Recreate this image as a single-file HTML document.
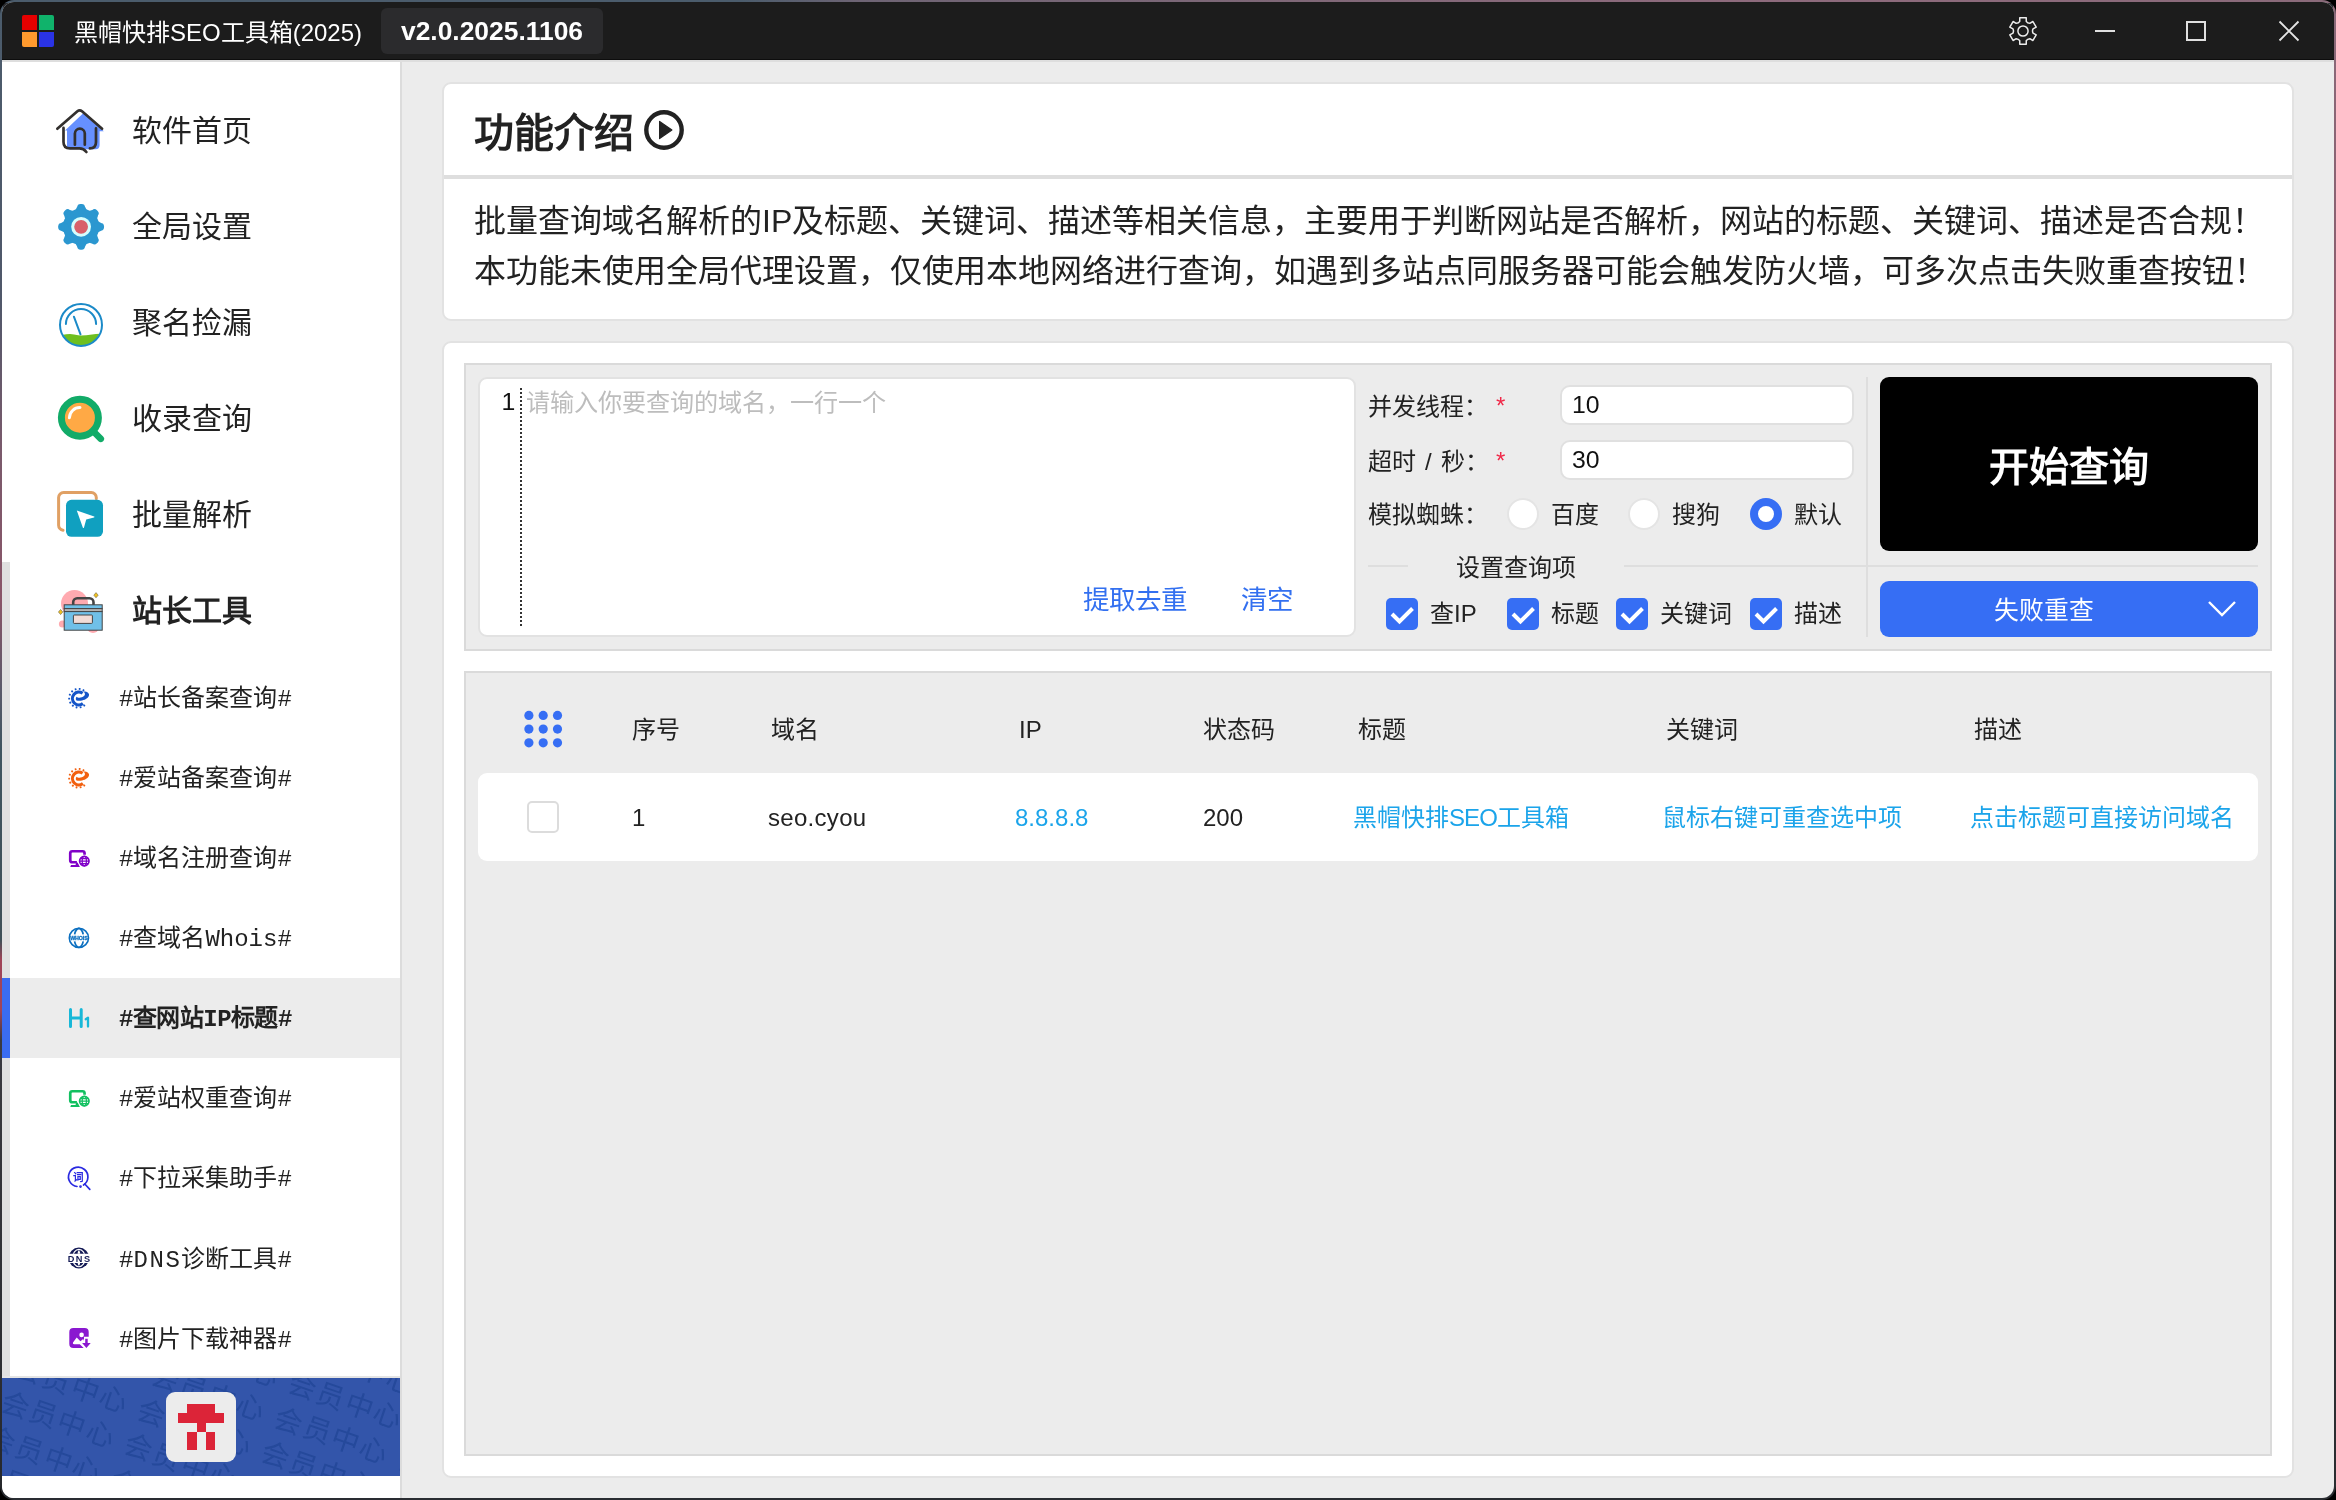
<!DOCTYPE html>
<html lang="zh-CN">
<head>
<meta charset="utf-8">
<title>黑帽快排SEO工具箱(2025)</title>
<style>
*{box-sizing:border-box;margin:0;padding:0}
html,body{width:2336px;height:1500px;overflow:hidden;background:#000}
body{font-family:"Liberation Sans",sans-serif;color:#222;position:relative}
.a{position:absolute;white-space:nowrap}
#frame{left:0;top:0;width:2336px;height:1500px;border-radius:14px;overflow:hidden;will-change:transform;
 background:
  linear-gradient(to right,#4b5c6c 0,#4b5c6c 740px,#6e6474 860px,#806878 1300px,#8d6a7c 1700px,#8a6a7a 2336px) top/100% 3px no-repeat,
  linear-gradient(to bottom,#4b5c6c 0,#50586a 300px,#7a5a6c 450px,#8a5568 600px,#5a5a6a 690px,#3f5560 750px,#3f5058 940px,#a04458 960px,#a04458 1010px,#3a3a40 1040px,#26282c 1500px) left/3px 100% no-repeat,
  linear-gradient(to bottom,#8a6a7a 0,#8a6070 250px,#a05a6c 400px,#8a5a6a 550px,#5a5a68 700px,#3f6470 770px,#3c4a54 900px,#3a3638 1000px,#303034 1100px,#2a2c30 1500px) right/3px 100% no-repeat,
  #2a2d32}
#win{left:2px;top:2px;width:2332px;height:1496px;border-radius:12px;overflow:hidden;background:#ececec}
/* title bar */
#tbar{left:0;top:0;width:2332px;height:58px;background:#1c1c1c;border-bottom:1px solid #0d0d0d}
#ttl{left:72px;top:2px;height:58px;line-height:58px;font-size:24px;color:#fff}
#ver{left:379px;top:6px;width:222px;height:46px;border-radius:6px;background:#2b2b2d;color:#fff;font-weight:bold;font-size:26.4px;line-height:46px;text-align:center}
#topline{left:0;top:58px;width:2332px;height:2px;background:#dedede}
/* sidebar */
#side{left:0;top:60px;width:398px;height:1436px;background:#fff}
#sideb{left:398px;top:60px;width:2px;height:1436px;background:#dcdcdc}
.mi{left:130px;height:96px;line-height:96px;font-size:30px;color:#222}
.si{left:117px;height:80px;line-height:80px;font-size:24px;color:#222;font-family:"Liberation Mono",monospace}
#grp{left:0;top:560px;width:8px;height:816px;background:#e0e0e0}
#act{left:0;top:976px;width:398px;height:80px;background:#ececec;border-left:8px solid #3a6cf0}
#vipline{left:0;top:1374px;width:398px;height:2px;background:#e4e4e4}
#vip{left:0;top:1376px;width:398px;height:98px;background:#3355aa;overflow:hidden}
#vipt{left:164px;top:1390px;width:70px;height:70px;border-radius:9px;background:#ececec}
/* cards */
.card{background:#fff;border:2px solid #e2e2e2;border-radius:9px}
.panel{background:#ececec;border:2px solid #dadada}
.wm{font-size:28px;line-height:36px;height:36px;color:#25499b;letter-spacing:2px}
.wm span{display:inline-block;width:130.5px}
.t24{font-size:24px;line-height:32px;height:32px}
.blue{color:#3370f0}
.cy{color:#1ba4ea}
.inp{background:#fff;border:2px solid #e0e0e0;border-radius:10px;font-size:24.8px;line-height:36px;padding-left:10px;color:#111}
.cb{width:32px;height:32px;border-radius:5px;background:#366ef4}
.rd{width:32px;height:32px;border-radius:50%;background:#fff;border:2px solid #e4e4e4}
.hl{height:2px;background:#dedede}
</style>
</head>
<body>
<div id="frame" class="a">
<div id="win" class="a">

<!-- TITLE BAR -->
<div id="tbar" class="a"></div>
<svg class="a" style="left:20px;top:13px" width="34" height="34" viewBox="0 0 34 34">
 <path d="M2 0H15V15H0V2A2 2 0 0 1 2 0Z" fill="#e60000"/>
 <path d="M17 0H30A2 2 0 0 1 32 2V15H17Z" fill="#10b36b"/>
 <path d="M0 17H15V32H2A2 2 0 0 1 0 30Z" fill="#ff9a2e"/>
 <path d="M17 17H32V30A2 2 0 0 1 30 32H17Z" fill="#2a33e6"/>
</svg>
<div id="ttl" class="a">黑帽快排SEO工具箱(2025)</div>
<div id="ver" class="a">v2.0.2025.1106</div>
<!-- window controls -->
<svg class="a" style="left:2004.3px;top:12px" width="34" height="34" viewBox="-17 -17 34 34" fill="none" stroke="#ececec" stroke-width="1.5" stroke-linejoin="round">
 <circle cx="0" cy="0" r="5.1"/>
 <path d="M3.25 -9.7L3.25 -13.35L-3.25 -13.35L-3.25 -9.7Q-4.5 -7.79 -6.78 -7.66L-9.94 -9.49L-13.19 -3.86L-10.03 -2.04Q-9.0 -0.0 -10.03 2.04L-13.19 3.86L-9.94 9.49L-6.78 7.66Q-4.5 7.79 -3.25 9.7L-3.25 13.35L3.25 13.35L3.25 9.7Q4.5 7.79 6.78 7.66L9.94 9.49L13.19 3.86L10.03 2.04Q9.0 0.0 10.03 -2.04L13.19 -3.86L9.94 -9.49L6.78 -7.66Q4.5 -7.79 3.25 -9.7Z"/>
</svg>
<div class="a" style="left:2093px;top:28px;width:20px;height:2px;background:#e0e0e0"></div>
<div class="a" style="left:2184px;top:19px;width:20px;height:20px;border:2px solid #e0e0e0"></div>
<svg class="a" style="left:2276px;top:18px" width="22" height="22" viewBox="0 0 22 22" stroke="#e4e4e4" stroke-width="1.9"><path d="M1.5 1.5L20.5 20.5M20.5 1.5L1.5 20.5"/></svg>
<div id="topline" class="a"></div>

<!-- SIDEBAR -->
<div id="side" class="a"></div>
<div id="sideb" class="a"></div>
<div id="grp" class="a"></div>
<div id="act" class="a"></div>

<!-- main menu icons -->
<svg class="a" style="left:48px;top:98px" width="60" height="60" viewBox="0 0 60 60" fill="none" stroke-linecap="round" stroke-linejoin="round">
 <path d="M33.2 13.3L15 30.5H17V46.2Q17 49.2 20 49.2H45.5Q49.6 49.2 49.6 45V31.3H53.8Z" fill="#6690ff"/>
 <path d="M7.3 28.7L27.4 11.3Q29.7 9.4 32 11.3L52.1 28.7" stroke="#33302e" stroke-width="2.7"/>
 <path d="M13.5 27.9V42Q13.5 48.4 20 48.4H29.5Q33.6 48.4 36.4 52" stroke="#33302e" stroke-width="2.7"/>
 <path d="M46 28.4V42Q46 48.4 39.9 48.4" stroke="#33302e" stroke-width="2.7"/>
 <path d="M24.9 44.7V33.6A4.95 4.95 0 0 1 34.8 33.6V44.7" stroke="#33302e" stroke-width="2.7"/>
</svg>
<svg class="a" style="left:54px;top:200px" width="50" height="50" viewBox="0 0 50 50">
 <g transform="translate(25.1 24.8)" fill="#2b97d0">
  <circle r="18.2"/>
  <g id="tooth"><rect x="-3.9" y="-22.9" width="7.8" height="10" rx="3.4"/><path d="M-5.8 -16.5L-3.9 -20H3.9L5.8 -16.5Z"/></g>
  <use href="#tooth" transform="rotate(45)"/><use href="#tooth" transform="rotate(90)"/><use href="#tooth" transform="rotate(135)"/>
  <use href="#tooth" transform="rotate(180)"/><use href="#tooth" transform="rotate(225)"/><use href="#tooth" transform="rotate(270)"/><use href="#tooth" transform="rotate(315)"/>
  <circle r="9.9" fill="#d6fdfd"/><circle r="6.9" fill="#d8606a"/>
 </g>
</svg>
<svg class="a" style="left:54px;top:298px" width="50" height="50" viewBox="0 0 50 50" fill="none" stroke="#1b8ac8" stroke-width="2" stroke-linecap="round">
 <clipPath id="gc"><circle cx="25" cy="24.9" r="20.6"/></clipPath>
 <path d="M0 36L6 35Q13 33.6 18 34.4T25 35.6Q30 35.4 36 34.4T50 34V50H0Z" fill="#6ebf1f" stroke="none" clip-path="url(#gc)"/>
 <circle cx="25" cy="24.9" r="21"/>
 <path d="M9.9 24.1A15.1 15.1 0 0 1 40.1 24.1"/>
 <path d="M17.9 16.7L24.5 34.3"/>
</svg>
<svg class="a" style="left:54px;top:391px" width="52" height="52" viewBox="0 0 52 52" fill="none" stroke-linecap="round">
 <path d="M36 37L44.8 45.8" stroke="#12ab68" stroke-width="6.6"/>
 <circle cx="23.9" cy="24.7" r="18.5" fill="#ffa945" stroke="#12ab68" stroke-width="7"/>
 <path d="M13.4 24.7A10.5 10.5 0 0 1 24 14.6" stroke="#fff" stroke-width="3"/>
</svg>
<svg class="a" style="left:48px;top:484px" width="60" height="60" viewBox="0 0 60 60" fill="none">
 <path d="M46.3 12.4V11.5A5 5 0 0 0 41.3 6.5H13.6A5 5 0 0 0 8.6 11.5V39.3A5 5 0 0 0 13 44.2" stroke="#e0a064" stroke-width="3" stroke-linecap="round"/>
 <rect x="16" y="13.8" width="37" height="37" rx="5.5" fill="#10a0c0"/>
 <path d="M26.8 24.6L44.2 30.6Q45 31 44 31.5L36.2 33.6L34 41.4Q33.4 42.6 32.8 41.4Z" fill="#fff"/>
</svg>
<svg class="a" style="left:48px;top:584px" width="60" height="60" viewBox="0 0 60 60">
 <circle cx="24.5" cy="17.5" r="13.5" fill="#ffaab0"/><circle cx="43" cy="41" r="6" fill="#ffaab0"/><circle cx="12.5" cy="38" r="3.6" fill="#ffaab0"/>
 <path d="M23.2 19V16.2A4 4 0 0 1 27.2 12.2H39.5A4 4 0 0 1 43.5 16.2V19" fill="none" stroke="#444" stroke-width="2.6"/>
 <g stroke="#444" stroke-width="1">
  <rect x="14.2" y="18.8" width="38" height="3.8" fill="#70c0e8"/>
  <rect x="14.2" y="22.6" width="38" height="3" fill="#b4b4b4"/>
  <rect x="14.2" y="25.6" width="38" height="18.6" fill="#70c0e8"/>
  <rect x="23.4" y="29" width="19" height="8.4" rx="0.8" fill="#f2dcd6"/>
 </g>
 <path d="M46 6.6L48.2 9.2L46 11.8L43.8 9.2Z M10.6 23.4L12.8 26L10.6 28.6L8.4 26Z" fill="#f0c020" stroke="#554" stroke-width="0.5"/>
</svg>

<div class="a mi" style="top:81px">软件首页</div>
<div class="a mi" style="top:177px">全局设置</div>
<div class="a mi" style="top:273px">聚名捡漏</div>
<div class="a mi" style="top:369px">收录查询</div>
<div class="a mi" style="top:465px">批量解析</div>
<div class="a mi" style="top:561px;font-weight:bold">站长工具</div>

<!-- sub menu icons -->
<svg width="0" height="0" style="position:absolute">
 <defs>
  <g id="swirl">
   <path d="M24.6 15.3A6.4 6.4 0 1 0 24.9 25.5" fill="none" stroke="currentColor" stroke-width="3.1"/>
   <path d="M25.2 13.4C29.6 13.3 32.2 15.4 30.6 18.6C28.6 22.2 22 23.6 18.4 22.4C17.5 21 17.7 19.6 18.7 18.7C20 20.4 23.8 20 26 18.1C27.6 16.6 27.2 14.6 25.2 13.4Z" fill="currentColor"/>
   <g fill="currentColor" transform="translate(20.5 20.2)">
    <rect id="dt" x="8.4" y="-0.9" width="1.9" height="1.8" rx="0.4" transform="rotate(-58)"/>
    <use href="#dt" transform="rotate(-25)"/><use href="#dt" transform="rotate(-50)"/><use href="#dt" transform="rotate(-75)"/><use href="#dt" transform="rotate(-100)"/>
    <use href="#dt" transform="rotate(-125)"/><use href="#dt" transform="rotate(-150)"/><use href="#dt" transform="rotate(-175)"/><use href="#dt" transform="rotate(-200)"/>
    <use href="#dt" transform="rotate(-225)"/><use href="#dt" transform="rotate(-250)"/>
   </g>
  </g>
  <g id="mon" fill="none" stroke="currentColor">
   <path d="M26.55 16.8V15.25A2 2 0 0 0 24.55 13.25H14.25A2 2 0 0 0 12.25 15.25V22.25A2 2 0 0 0 14.25 24.25H18.9" stroke-width="2.7"/>
   <path d="M12.3 28.9L13 26.9H17.6L18 24.5H19.6L21.9 28.9Z" fill="currentColor" stroke="none"/>
   <circle cx="26.3" cy="23.1" r="4.7" stroke-width="1.7"/>
   <ellipse cx="26.3" cy="23.1" rx="2.1" ry="4.7" stroke-width="1.3"/>
   <path d="M21.6 23.1H31M22.4 20.6H30.2M22.4 25.7H30.2" stroke-width="1.2"/>
  </g>
 </defs>
</svg>
<svg class="a" style="left:56px;top:676px;color:#1455c8" width="40" height="40" viewBox="0 0 40 40"><use href="#swirl"/></svg>
<svg class="a" style="left:56px;top:756px;color:#f26010" width="40" height="40" viewBox="0 0 40 40"><use href="#swirl"/></svg>
<svg class="a" style="left:56px;top:836px;color:#8000c8" width="40" height="40" viewBox="0 0 40 40"><use href="#mon"/></svg>
<svg class="a" style="left:56px;top:916px" width="40" height="40" viewBox="0 0 40 40" fill="none" stroke="#0b6fc0" stroke-width="1.6">
 <circle cx="20.9" cy="19.9" r="9.6"/>
 <path d="M16.6 16.4Q17.6 11 20.9 10.3Q24.2 11 25.2 16.4M16.6 23.4Q17.6 28.8 20.9 29.5Q24.2 28.8 25.2 23.4" stroke-width="1.7"/>
 <text x="20.9" y="22" text-anchor="middle" font-family="Liberation Sans, sans-serif" font-weight="bold" font-size="5.3" fill="#0b6fc0" stroke="#0b6fc0" stroke-width="0.3" letter-spacing="-0.1">WHOIS</text>
</svg>
<svg class="a" style="left:56px;top:996px" width="40" height="40" viewBox="0 0 40 40" fill="none" stroke="#18b8d8" stroke-linecap="round" stroke-linejoin="round">
 <path d="M12.5 11.4V28.4M23.2 11.4V28.4M12.5 19.9H23.2" stroke-width="3"/>
 <path d="M27.7 21.2L30 19.7V28.6" stroke-width="2.3"/>
</svg>
<svg class="a" style="left:56px;top:1076px;color:#12c060" width="40" height="40" viewBox="0 0 40 40"><use href="#mon"/></svg>
<svg class="a" style="left:56px;top:1156px" width="40" height="40" viewBox="0 0 40 40" fill="none" stroke="#2a2ae0" stroke-width="1.7" stroke-linecap="round">
 <path d="M19 28.5A9.7 9.7 0 1 1 25.5 27"/>
 <path d="M26.8 26L31.8 31.3"/>
 <circle cx="22.5" cy="28.6" r="0.5" fill="#2a2ae0"/>
 <text x="20" y="22.9" text-anchor="middle" font-family="Liberation Sans, sans-serif" font-size="10.5" font-weight="bold" fill="#2a2ae0" stroke="none">词</text>
</svg>
<svg class="a" style="left:56px;top:1236px" width="40" height="40" viewBox="0 0 40 40">
 <clipPath id="dc"><path d="M0 0H40V15.7H0ZM0 25H40V40H0Z"/></clipPath>
 <g clip-path="url(#dc)">
  <circle cx="20.9" cy="20" r="10.4" fill="#141a55"/>
  <ellipse cx="20.9" cy="20" rx="6.3" ry="8.7" fill="none" stroke="#fff" stroke-width="1.15"/>
  <ellipse cx="20.9" cy="20" rx="1.6" ry="7.7" fill="#fff"/>
 </g>
 <text x="21.6" y="23.9" text-anchor="middle" font-family="Liberation Sans, sans-serif" font-weight="bold" font-size="9.2" fill="#141a55" letter-spacing="1.5">DNS</text>
</svg>
<svg class="a" style="left:56px;top:1316px" width="40" height="40" viewBox="0 0 40 40">
 <path d="M15.3 10H26.7A4 4 0 0 1 30.7 14V18.7H26V22.8L25.2 21L22.4 23.3L18.7 19.6L15 24.6Q14.4 26.2 16 26.2H21.8L25.7 29.9H15.3A4 4 0 0 1 11.3 25.9V14A4 4 0 0 1 15.3 10Z" fill="#8a18d0"/>
 <circle cx="23.6" cy="16.9" r="2.3" fill="#fff"/>
 <path d="M27.2 20.7H29.7V25.1H32.7L28.4 30.1L24.1 25.1H27.2Z" fill="#8a18d0"/>
</svg>

<div class="a si" style="top:658px">#站长备案查询#</div>
<div class="a si" style="top:738px">#爱站备案查询#</div>
<div class="a si" style="top:818px">#域名注册查询#</div>
<div class="a si" style="top:898px">#查域名Whois#</div>
<div class="a si" style="top:978px;font-weight:bold;letter-spacing:-0.53px">#查网站IP标题#</div>
<div class="a si" style="top:1058px">#爱站权重查询#</div>
<div class="a si" style="top:1138px">#下拉采集助手#</div>
<div class="a si" style="top:1219px">#<span style="letter-spacing:1.6px">DNS</span>诊断工具#</div>
<div class="a si" style="top:1299px">#图片下载神器#</div>

<div id="vipline" class="a"></div>
<div id="vip" class="a"><div class="a" style="left:0;top:0;width:10px;height:10px;transform:rotate(19deg);transform-origin:0 0">
<div class="a wm" style="left:-117.4px;top:-144.4px"><span>会员中心</span><span>会员中心</span><span>会员中心</span><span>会员中心</span><span>会员中心</span></div>
<div class="a wm" style="left:-118.9px;top:-107.2px"><span>会员中心</span><span>会员中心</span><span>会员中心</span><span>会员中心</span><span>会员中心</span></div>
<div class="a wm" style="left:-120.4px;top:-70.0px"><span>会员中心</span><span>会员中心</span><span>会员中心</span><span>会员中心</span><span>会员中心</span></div>
<div class="a wm" style="left:-121.9px;top:-32.8px"><span>会员中心</span><span>会员中心</span><span>会员中心</span><span>会员中心</span><span>会员中心</span></div>
<div class="a wm" style="left:-123.4px;top:4.4px"><span>会员中心</span><span>会员中心</span><span>会员中心</span><span>会员中心</span><span>会员中心</span></div>
<div class="a wm" style="left:-124.9px;top:41.6px"><span>会员中心</span><span>会员中心</span><span>会员中心</span><span>会员中心</span><span>会员中心</span></div>
<div class="a wm" style="left:-126.4px;top:78.8px"><span>会员中心</span><span>会员中心</span><span>会员中心</span><span>会员中心</span><span>会员中心</span></div>
</div></div>
<div id="vipt" class="a"></div>
<svg class="a" style="left:175.8px;top:1401.9px" width="46.4" height="46.4" viewBox="0 0 5 5" fill="#dc2438" shape-rendering="crispEdges"><path d="M1 0H4V1H5V2H3V3H2V2H0V1H1ZM1 3H2V5H1ZM3 3H4V5H3Z"/></svg>

<!-- CARD 1 -->
<div class="a card" style="left:440px;top:80px;width:1852px;height:239px"></div>
<div class="a" style="left:442px;top:173px;width:1848px;height:4px;background:#dedede"></div>
<div class="a" style="left:472px;top:102.5px;height:56px;line-height:56px;font-size:40px;font-weight:bold">功能介绍</div>
<svg class="a" style="left:640px;top:106px" width="44" height="44" viewBox="0 0 44 44"><circle cx="22" cy="22" r="17.7" fill="none" stroke="#222" stroke-width="4.4"/><path d="M17.6 13.4L29.9 22L17.6 30.6Z" fill="#222" stroke="#222" stroke-width="1.2" stroke-linejoin="round"/></svg>
<div class="a" style="left:472px;top:194px;height:50px;line-height:50px;font-size:32px">批量查询域名解析的IP及标题、关键词、描述等相关信息，主要用于判断网站是否解析，网站的标题、关键词、描述是否合规！</div>
<div class="a" style="left:472px;top:244px;height:50px;line-height:50px;font-size:32px">本功能未使用全局代理设置，仅使用本地网络进行查询，如遇到多站点同服务器可能会触发防火墙，可多次点击失败重查按钮！</div>

<!-- CARD 2 -->
<div class="a card" style="left:440px;top:339px;width:1852px;height:1137px"></div>
<div class="a panel" style="left:462px;top:361px;width:1808px;height:288px"></div>
<div class="a panel" style="left:462px;top:669px;width:1808px;height:785px"></div>

<!-- textarea -->
<div class="a" style="left:476px;top:375px;width:878px;height:260px;background:#fff;border:2px solid #e2e2e2;border-radius:9px"></div>
<div class="a" style="left:499.5px;top:383px;height:34px;line-height:34px;font-size:24.8px;color:#111">1</div>
<div class="a" style="left:518px;top:386px;width:0;height:238px;border-left:2px dotted #333"></div>
<div class="a" style="left:524px;top:384px;height:34px;line-height:34px;font-size:24.1px;color:#bdbdbd">请输入你要查询的域名，一行一个</div>
<div class="a blue" style="left:1081px;top:580px;height:36px;line-height:36px;font-size:26.5px">提取去重</div>
<div class="a blue" style="left:1239px;top:580px;height:36px;line-height:36px;font-size:26.5px">清空</div>

<!-- form -->
<div class="a t24" style="left:1366px;top:389px">并发线程：</div>
<div class="a" style="left:1494px;top:388px;font-size:24px;line-height:32px;color:#f02848">*</div>
<div class="a inp" style="left:1558px;top:383px;width:294px;height:40px">10</div>
<div class="a t24" style="left:1366px;top:444px;word-spacing:2.4px">超时 / 秒：</div>
<div class="a" style="left:1494px;top:443px;font-size:24px;line-height:32px;color:#f02848">*</div>
<div class="a inp" style="left:1558px;top:438px;width:294px;height:40px">30</div>
<div class="a t24" style="left:1366px;top:497px">模拟蜘蛛：</div>
<div class="a rd" style="left:1505px;top:496px"></div>
<div class="a t24" style="left:1549px;top:497px">百度</div>
<div class="a rd" style="left:1626px;top:496px"></div>
<div class="a t24" style="left:1670px;top:497px">搜狗</div>
<div class="a" style="left:1748px;top:496px;width:32px;height:32px;border-radius:50%;border:8px solid #366ef4;background:#fff"></div>
<div class="a t24" style="left:1792px;top:497px">默认</div>

<div class="a hl" style="left:1366px;top:563px;width:40px"></div>
<div class="a t24" style="left:1454px;top:550px">设置查询项</div>
<div class="a hl" style="left:1622px;top:563px;width:634px"></div>
<div class="a" style="left:1864px;top:375px;width:2px;height:260px;background:#dedede"></div>

<div class="a cb" style="left:1384px;top:596px"></div>
<div class="a t24" style="left:1428px;top:596px">查IP</div>
<div class="a cb" style="left:1505px;top:596px"></div>
<div class="a t24" style="left:1549px;top:596px">标题</div>
<div class="a cb" style="left:1614px;top:596px"></div>
<div class="a t24" style="left:1658px;top:596px">关键词</div>
<div class="a cb" style="left:1748px;top:596px"></div>
<div class="a t24" style="left:1792px;top:596px">描述</div>
<svg class="a" style="left:1384px;top:596px" width="400" height="32" viewBox="0 0 400 32" fill="none" stroke="#fff" stroke-width="4">
 <path id="ck" d="M6 16l7.5 7.5L26.5 10.5"/>
 <use href="#ck" x="121"/><use href="#ck" x="230"/><use href="#ck" x="364"/>
</svg>

<!-- buttons -->
<div class="a" style="left:1878px;top:375px;width:378px;height:174px;border-radius:9px;background:#000;color:#fff;font-size:40px;font-weight:bold;line-height:180px;text-align:center">开始查询</div>
<div class="a" style="left:1878px;top:579px;width:378px;height:56px;border-radius:9px;background:#366ef4"></div>
<div class="a" style="left:1992px;top:581px;height:56px;line-height:56px;font-size:24.8px;color:#fff">失败重查</div>
<svg class="a" style="left:2204px;top:597px" width="32" height="20" viewBox="0 0 32 20" fill="none" stroke="#fff" stroke-width="2.4"><path d="M3 3L16 16L29 3"/></svg>

<!-- table -->
<svg class="a" style="left:522px;top:708px" width="40" height="40" viewBox="0 0 40 40" fill="#366ef4">
 <g id="dr"><circle cx="4.9" cy="5.4" r="4.6"/><circle cx="19.2" cy="5.4" r="4.6"/><circle cx="33.5" cy="5.4" r="4.6"/></g>
 <use href="#dr" y="13.7"/><use href="#dr" y="27.4"/>
</svg>
<div class="a t24" style="left:630px;top:712px">序号</div>
<div class="a t24" style="left:769px;top:712px">域名</div>
<div class="a t24" style="left:1017px;top:712px">IP</div>
<div class="a t24" style="left:1201px;top:712px">状态码</div>
<div class="a t24" style="left:1356px;top:712px">标题</div>
<div class="a t24" style="left:1664px;top:712px">关键词</div>
<div class="a t24" style="left:1972px;top:712px">描述</div>

<div class="a" style="left:476px;top:771px;width:1780px;height:88px;border-radius:9px;background:#fff"></div>
<div class="a" style="left:525px;top:799px;width:32px;height:32px;border-radius:5px;background:#fff;border:2px solid #dcdcdc"></div>
<div class="a t24" style="left:630px;top:800px">1</div>
<div class="a t24" style="left:766px;top:800px;letter-spacing:0.3px">seo.cyou</div>
<div class="a t24 cy" style="left:1013px;top:800px">8.8.8.8</div>
<div class="a t24" style="left:1201px;top:800px">200</div>
<div class="a t24 cy" style="left:1351px;top:800px">黑帽快排<span style="letter-spacing:-0.9px">SEO</span>工具箱</div>
<div class="a t24 cy" style="left:1660px;top:800px">鼠标右键可重查选中项</div>
<div class="a t24 cy" style="left:1968px;top:800px">点击标题可直接访问域名</div>

</div>
</div>
</body>
</html>
